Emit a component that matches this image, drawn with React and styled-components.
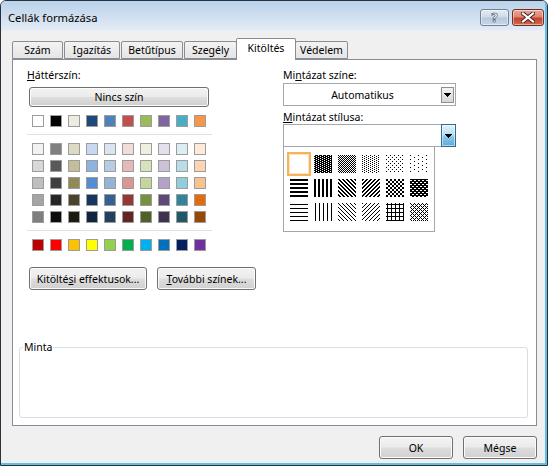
import React from 'react';
import styled, { createGlobalStyle } from 'styled-components';

const GlobalStyle = createGlobalStyle`
  html, body { margin: 0; padding: 0; background: #ffffff; }
  body { font-family: "Noto Sans", "Open Sans", sans-serif; color: #000; }
  #root { width: 549px; height: 468px; }
`;

const Frame = styled.div`
  box-sizing: border-box;
  width: 548px;
  height: 466px;
  border: 1px solid #28323c;
  border-radius: 6px 6px 0 0;
  overflow: hidden;
  background: #f0f0f0;
`;

const Client = styled.div`
  box-sizing: border-box;
  height: 100%;
  border-right: 2px solid #62bde9;
  border-bottom: 2px solid #62bde9;
  display: flex;
  flex-direction: column;
`;

const TitleBar = styled.div`
  height: 30px;
  flex: none;
  display: flex;
  align-items: flex-start;
  padding: 0 1px 0 7px;
  background: linear-gradient(#bad2eb 0%, #cddded 45%, #dde8f4 85%, #e6edf5 100%);
`;

const TitleText = styled.div`
  margin-top: 9px;
  font-size: 11.2px;
  line-height: 16px;
`;

const TitleButtons = styled.div`
  margin-left: auto;
  margin-top: 8px;
  display: flex;
  gap: 3px;
`;

const CaptionButton = styled.div`
  box-sizing: border-box;
  width: ${p => p.$w}px;
  height: 17px;
  border-radius: 3px;
  display: flex;
  align-items: center;
  justify-content: center;
  border: 1px solid ${p => (p.$close ? '#6f3027' : '#6f8296')};
  background: ${p =>
    p.$close
      ? 'linear-gradient(#e8a898 0%, #dc8472 45%, #c6412f 55%, #d26a4f 100%)'
      : 'linear-gradient(#e4ecf5 0%, #cfdbe9 45%, #b6c8dc 55%, #c9d8e8 100%)'};
  box-shadow: inset 0 0 0 1px rgba(255, 255, 255, 0.45);
`;

const HelpGlyph = styled.span`
  font-family: "DejaVu Sans", sans-serif;
  font-weight: bold;
  font-size: 12px;
  line-height: 12px;
  color: #fff;
  -webkit-text-stroke: 0.6px #3c4c60;
`;

const Body = styled.div`
  flex: 1;
  padding: 7px 0 0 11px;
  display: flex;
  flex-direction: column;
`;

const TabRow = styled.div`
  display: flex;
  align-items: flex-end;
  height: 21px;
  gap: 1px;
`;

const Tab = styled.div`
  box-sizing: border-box;
  width: ${p => p.$w}px;
  height: ${p => (p.$active ? 22 : 18)}px;
  margin: ${p => (p.$active ? '0 -2px -1px -2px' : '0')};
  border: 1px solid #898c95;
  border-bottom: ${p => (p.$active ? 'none' : '1px solid #898c95')};
  border-radius: 2px 2px 0 0;
  background: ${p => (p.$active ? '#ffffff' : 'linear-gradient(#f3f3f3, #e4e4e4)')};
  font-size: 10.5px;
  line-height: ${p => (p.$active ? 19 : 16)}px;
  text-align: center;
  position: relative;
  z-index: ${p => (p.$active ? 1 : 0)};
`;

const Panel = styled.div`
  box-sizing: border-box;
  width: 525px;
  height: 367px;
  border: 1px solid #898c95;
  background: #ffffff;
  display: flex;
  flex-direction: column;
  padding: 0 8px 7px 6px;
`;

const ContentRow = styled.div`
  display: grid;
  grid-template-columns: 256px 173px;
  padding: 8px 0 0 8px;
`;

const Column = styled.div`
  display: flex;
  flex-direction: column;
  align-items: flex-start;
`;

const Label = styled.div`
  font-size: 10.5px;
  line-height: 14px;
  height: 14px;
  margin-top: ${p => p.$mt || 0}px;
  white-space: nowrap;
`;

const Button = styled.button`
  box-sizing: border-box;
  width: ${p => p.$w}px;
  height: ${p => p.$h || 23}px;
  margin: 0;
  padding: 0;
  border: 1px solid #707070;
  border-radius: 3px;
  background: linear-gradient(#f3f3f3 0%, #ebebeb 48%, #dddddd 52%, #d0d0d0 100%);
  box-shadow: inset 0 0 0 1px #fbfbfb;
  font-family: inherit;
  font-size: 10.5px;
  color: #000;
  line-height: 14px;
  white-space: nowrap;
`;

const NoColorButton = styled(Button)`
  margin: 5px 0 0 2px;
`;

const SwatchRow = styled.div`
  display: flex;
  gap: 6px;
  padding-left: 5px;
  margin-top: ${p => p.$mt}px;
`;

const SwatchGrid = styled.div`
  display: flex;
  flex-direction: column;
  gap: 5px;
  margin-top: 8px;
`;

const Swatch = styled.span`
  box-sizing: border-box;
  width: 12px;
  height: 12px;
  border: 1px solid #9c9c9c;
  background: ${p => p.$c};
`;

const Separator = styled.div`
  width: 185px;
  height: 1px;
  background: #e0e1e4;
  margin-top: 7px;
`;

const ButtonRow = styled.div`
  display: flex;
  gap: 10px;
  margin: 16px 0 0 2px;
`;

const Combo = styled.div`
  box-sizing: border-box;
  width: 173px;
  height: 23px;
  border: 1px solid #a3a7ae;
  background: #fff;
  display: flex;
  align-items: center;
  margin-top: ${p => p.$mt || 0}px;
`;

const ComboText = styled.div`
  flex: 1;
  text-align: center;
  font-size: 10.5px;
  line-height: 14px;
`;

const ArrowButton = styled.div`
  box-sizing: border-box;
  width: 13px;
  height: 16px;
  margin-right: 1px;
  border: 1px solid #8f8f8f;
  background: linear-gradient(#f4f4f4, #d6d6d6);
  display: flex;
  align-items: center;
  justify-content: center;
`;

const ActiveArrowButton = styled.div`
  box-sizing: border-box;
  width: 15px;
  height: 23px;
  margin: 0 -1px 0 auto;
  border: 1px solid #2f6a98;
  background: linear-gradient(#e2f2fb 0%, #b9def4 45%, #8ac7ea 55%, #5ea9d8 100%);
  box-shadow: inset 0 0 0 1px rgba(255, 255, 255, 0.5);
  display: flex;
  align-items: center;
  justify-content: center;
`;

const PatternList = styled.div`
  box-sizing: border-box;
  width: 152px;
  height: 85px;
  border: 1px solid #a6a6a6;
  border-top: none;
  background: #fff;
  padding: 5px 0 0 3px;
`;

const PatternGrid = styled.div`
  display: grid;
  grid-template-columns: repeat(6, 24px);
  grid-auto-rows: 24px;
`;

const PatternCell = styled.div`
  box-sizing: border-box;
  width: 24px;
  height: 24px;
  display: flex;
  align-items: center;
  justify-content: center;
  border: 2px solid ${p => (p.$selected ? '#f7b35c' : 'transparent')};
  box-shadow: ${p => (p.$selected ? 'inset 0 0 0 1px #fde3bd' : 'none')};
`;

const GroupBox = styled.fieldset`
  box-sizing: border-box;
  margin: auto 0 0 0;
  padding: 0;
  min-width: 0;
  height: 77px;
  border: 1px solid #d5dfe5;
  border-radius: 3px;
`;

const GroupLegend = styled.legend`
  font-size: 10.5px;
  line-height: 13px;
  padding: 0 1px;
  margin-left: 3px;
`;

const Footer = styled.div`
  width: 525px;
  display: flex;
  justify-content: flex-end;
  gap: 10px;
  padding-top: 10px;
`;

const THEME = ['#ffffff', '#000000', '#eeece1', '#1f497d', '#4f81bd', '#c0504d', '#9bbb59', '#8064a2', '#4bacc6', '#f79646'];
const TINTS = [
  ['#f2f2f2', '#7f7f7f', '#ddd9c3', '#c6d9f0', '#dbe5f1', '#f2dcdb', '#ebf1dd', '#e5e0ec', '#dbeef3', '#fdeada'],
  ['#d8d8d8', '#595959', '#c4bd97', '#8db3e2', '#b8cce4', '#e5b9b7', '#d7e3bc', '#ccc1d9', '#b7dde8', '#fbd5b5'],
  ['#bfbfbf', '#3f3f3f', '#938953', '#548dd4', '#95b3d7', '#d99694', '#c3d69b', '#b2a2c7', '#92cddc', '#fac08f'],
  ['#a5a5a5', '#262626', '#494429', '#17365d', '#366092', '#953734', '#76923c', '#5f497a', '#31859b', '#e36c09'],
  ['#7f7f7f', '#0c0c0c', '#1d1b10', '#0f243e', '#244061', '#632423', '#4f6128', '#3f3151', '#205867', '#974806'],
];
const STANDARD = ['#c00000', '#ff0000', '#ffc000', '#ffff00', '#92d050', '#00b050', '#00b0f0', '#0070c0', '#002060', '#7030a0'];

const PATTERNS = [
  { id: 'none', none: true },
  { id: 'g75', w: 4, h: 2, f: (x, y) => !((x === 0 && y === 0) || (x === 2 && y === 1)) },
  { id: 'g50', w: 2, h: 2, f: (x, y) => (x + y) % 2 === 0 },
  { id: 'g25', w: 4, h: 2, f: (x, y) => (x === 0 && y === 0) || (x === 2 && y === 1) },
  { id: 'g12', w: 4, h: 4, f: (x, y) => (x === 0 && y === 0) || (x === 2 && y === 2) },
  { id: 'g6', w: 8, h: 4, f: (x, y) => (x === 0 && y === 0) || (x === 4 && y === 2) },
  { id: 'hs', w: 1, h: 4, f: (x, y) => y < 2 },
  { id: 'vs', w: 4, h: 1, f: x => x < 2 },
  { id: 'rds', w: 4, h: 4, f: (x, y) => (x - y + 8) % 4 < 2 },
  { id: 'ds', w: 4, h: 4, f: (x, y) => (x + y) % 4 < 2 },
  { id: 'dc', w: 4, h: 4, f: (x, y) => ((x >> 1) + (y >> 1)) % 2 === 0 },
  { id: 'tdc', w: 4, h: 4, f: (x, y) => !((y === 1 && x < 2) || (y === 3 && x >= 2)) },
  { id: 'ths', w: 1, h: 4, f: (x, y) => y === 1 },
  { id: 'tvs', w: 4, h: 1, f: x => x === 1 },
  { id: 'trds', w: 4, h: 4, f: (x, y) => (x - y + 8) % 4 === 0 },
  { id: 'tds', w: 4, h: 4, f: (x, y) => (x + y) % 4 === 0 },
  { id: 'thc', w: 4, h: 4, f: (x, y) => x === 1 || y === 1 },
  { id: 'tdc2', w: 4, h: 4, f: (x, y) => (x + y) % 4 === 0 || (x - y + 8) % 4 === 0 },
];

function PatternIcon({ p }) {
  if (p.none) {
    return <svg width="18" height="18" />;
  }
  const px = [];
  for (let y = 0; y < p.h; y++) {
    for (let x = 0; x < p.w; x++) {
      if (p.f(x, y)) px.push(<rect key={`${x}-${y}`} x={x} y={y} width="1" height="1" fill="#000" />);
    }
  }
  const pid = `pat-${p.id}`;
  return (
    <svg width="18" height="18" shapeRendering="crispEdges">
      <defs>
        <pattern id={pid} patternUnits="userSpaceOnUse" width={p.w} height={p.h}>
          {px}
        </pattern>
      </defs>
      <rect x="0" y="0" width="18" height="18" fill="#fff" />
      <rect x="0" y="0" width="18" height="18" fill={`url(#${pid})`} />
    </svg>
  );
}

function Arrow() {
  return (
    <svg width="7" height="4" viewBox="0 0 7 4" shapeRendering="crispEdges">
      <polygon points="0,0 7,0 3.5,4" fill="#000" />
    </svg>
  );
}

function CloseX() {
  return (
    <svg width="14" height="11" viewBox="0 0 14 11">
      <path d="M2 1.5 L12 9.5 M12 1.5 L2 9.5" stroke="#4a1a14" strokeWidth="4" strokeLinecap="square" />
      <path d="M2 1.5 L12 9.5 M12 1.5 L2 9.5" stroke="#ffffff" strokeWidth="2.2" strokeLinecap="square" />
    </svg>
  );
}

const TABS = [
  { label: 'Szám', w: 51 },
  { label: 'Igazítás', w: 56 },
  { label: 'Betűtípus', w: 62 },
  { label: 'Szegély', w: 53 },
  { label: 'Kitöltés', w: 60, active: true },
  { label: 'Védelem', w: 53 },
];

export default function App() {
  return (
    <>
      <GlobalStyle />
      <Frame>
        <Client>
          <TitleBar>
            <TitleText>Cellák formázása</TitleText>
            <TitleButtons>
              <CaptionButton $w={29}>
                <HelpGlyph>?</HelpGlyph>
              </CaptionButton>
              <CaptionButton $w={32} $close>
                <CloseX />
              </CaptionButton>
            </TitleButtons>
          </TitleBar>
          <Body>
            <TabRow>
              {TABS.map(t => (
                <Tab key={t.label} $w={t.w} $active={t.active}>
                  {t.label}
                </Tab>
              ))}
            </TabRow>
            <Panel>
              <ContentRow>
                <Column>
                  <Label>
                    <u>H</u>áttérszín:
                  </Label>
                  <NoColorButton $w={180} $h={20}>
                    Nincs szín
                  </NoColorButton>
                  <SwatchRow $mt={8}>
                    {THEME.map((c, i) => (
                      <Swatch key={i} $c={c} />
                    ))}
                  </SwatchRow>
                  <Separator />
                  <SwatchGrid>
                    {TINTS.map((row, r) => (
                      <SwatchRow key={r} $mt={0}>
                        {row.map((c, i) => (
                          <Swatch key={i} $c={c} />
                        ))}
                      </SwatchRow>
                    ))}
                  </SwatchGrid>
                  <Separator />
                  <SwatchRow $mt={8}>
                    {STANDARD.map((c, i) => (
                      <Swatch key={i} $c={c} />
                    ))}
                  </SwatchRow>
                  <ButtonRow>
                    <Button $w={118}>
                      Kitölté<u>s</u>i effektusok...
                    </Button>
                    <Button $w={99}>
                      <u>T</u>ovábbi színek...
                    </Button>
                  </ButtonRow>
                </Column>
                <Column>
                  <Label>
                    Mi<u>n</u>tázat színe:
                  </Label>
                  <Combo $mt={1}>
                    <ComboText>Automatikus</ComboText>
                    <ArrowButton>
                      <Arrow />
                    </ArrowButton>
                  </Combo>
                  <Label $mt={4}>
                    <u>M</u>intázat stílusa:
                  </Label>
                  <Combo>
                    <ActiveArrowButton>
                      <Arrow />
                    </ActiveArrowButton>
                  </Combo>
                  <PatternList>
                    <PatternGrid>
                      {PATTERNS.map((p, i) => (
                        <PatternCell key={p.id} $selected={i === 0}>
                          <PatternIcon p={p} />
                        </PatternCell>
                      ))}
                    </PatternGrid>
                  </PatternList>
                </Column>
              </ContentRow>
              <GroupBox>
                <GroupLegend>Minta</GroupLegend>
              </GroupBox>
            </Panel>
            <Footer>
              <Button $w={74}>OK</Button>
              <Button $w={74}>Mégse</Button>
            </Footer>
          </Body>
        </Client>
      </Frame>
    </>
  );
}
